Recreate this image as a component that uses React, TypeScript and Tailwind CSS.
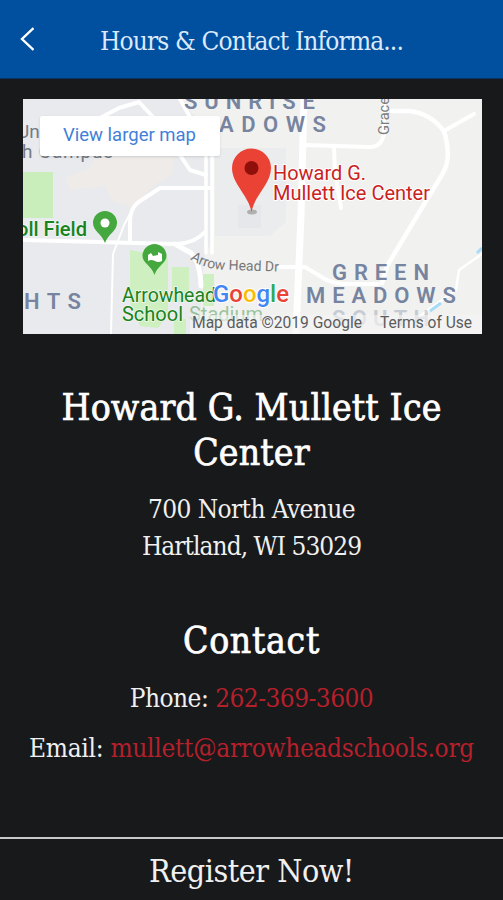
import { ReactNode } from 'react';

const SLAB = "font-['Roboto_Slab','DejaVu_Serif_Condensed','DejaVu_Serif',serif]";

function MapLabels() {
    return (
        <g fontFamily="Roboto, 'Liberation Sans', sans-serif">
            <g fill="#77849f" fontWeight="600" fontSize="22">
                <text x="184" y="109" textLength="131">SUNRISE</text>
                <text x="219" y="132" textLength="107">ADOWS</text>
                <text x="24" y="309" textLength="57">HTS</text>
                <text x="332" y="280" textLength="97">GREEN</text>
                <text x="306" y="303" textLength="150">MEADOWS</text>
                <text x="332" y="326" textLength="97" opacity="0.35">SOUTH</text>
            </g>
            <g fill="#747b82" fontSize="19">
                <text x="17" y="138">Un</text>
                <text x="22" y="158" textLength="91">h Campus</text>
            </g>
            <text
                transform="translate(389 135) rotate(-90)"
                fill="#7d7d7d"
                fontSize="15"
                textLength="38"
                lengthAdjust="spacingAndGlyphs"
            >
                Grace
            </text>
            <path id="arrow-head" d="M190 259 Q207 271 232 270 L290 272" fill="none" />
            <text fill="#777" fontSize="14">
                <textPath href="#arrow-head" textLength="91">Arrow Head Dr</textPath>
            </text>
            <g fill="#198221" stroke="#f3f7f1" strokeWidth="1.5" paintOrder="stroke" fontSize="19.500">
                <text x="17" y="236" fontWeight="500" textLength="70" lengthAdjust="spacingAndGlyphs">oll Field</text>
                <text x="122" y="302" textLength="94" lengthAdjust="spacingAndGlyphs">Arrowhead</text>
                <text x="122" y="321" textLength="61" lengthAdjust="spacingAndGlyphs">School</text>
                <text x="189" y="321" textLength="74" lengthAdjust="spacingAndGlyphs" opacity="0.4">Stadium</text>
            </g>
            <g fill="#c9221f" stroke="#fff" strokeWidth="2" paintOrder="stroke" fontSize="20">
                <text x="273" y="180" textLength="93" lengthAdjust="spacingAndGlyphs">Howard G.</text>
                <text x="273" y="200" textLength="157" lengthAdjust="spacingAndGlyphs">Mullett Ice Center</text>
            </g>
        </g>
    );
}

function MapCanvas() {
    return (
        <svg viewBox="23 99 459 235" className="block h-full w-full">
            <rect x="23" y="99" width="459" height="235" fill="#f1f1f0" />
            <path d="M23 99 H181 L194 116 L212 157 V241 L204 258 L199 334 H23Z" fill="#e9eaed" />
            <path d="M215 148 H286 V222 L270 236 H215Z" fill="#ebecee" />
            <path d="M238 205 H261 V228 H238Z" fill="#e6e7ea" />
            <path
                d="M65 178 L88 169 L96 157 L174 157 L173 174 L153 186 L132 207 L112 201 L105 186 L70 190Z"
                fill="#eeebe9"
            />
            <path d="M23 172 H53 V218 H23Z" fill="#c9eebb" />
            <path d="M130 250 L168 257 V314 L158 328 L140 326 L130 302Z" fill="#ceefc0" />
            <path d="M172 267 H189 V302 H172Z M174 319 H186 V334 H174Z M203 274 H214 V306 H203Z" fill="#ceefc0" />

            <g fill="none" stroke="#fff" strokeLinejoin="round" strokeLinecap="round">
                <path d="M23 240 L135 243 L177 244 Q195 243 205 232" strokeWidth="4" />
                <path d="M175 244 L191 253 Q200 261 201 286" strokeWidth="5" />
                <path d="M206 156 V253 M212 156 V253" strokeWidth="3.5" />
                <path d="M180 155 L190 170 L206 175" strokeWidth="4" />
                <path d="M130 241 V222 Q130 207 140 201 L160 188 H212" strokeWidth="4" />
                <path d="M98 119 L119 108 L139 102 L153 117 M180 99 L190 117" strokeWidth="4" />
                <path d="M130 214 L124 225 L113 254 L111 334" strokeWidth="2" />
                <path d="M304 99 L301 215 L296 334" strokeWidth="7" />
                <path d="M304 145 L370 147 Q382 147 384 133 V99" strokeWidth="4" />
                <path d="M334 147 L335 172 L341 208" strokeWidth="4" />
                <path
                    d="M392 111 H409 Q430 113 444 131 Q452 158 443 173 L417 216 L387 266 L382 283"
                    strokeWidth="4.5"
                />
                <path d="M444 131 L474 114" strokeWidth="4" />
                <path d="M280 267 H305 L325 279 Q334 284 347 284 H378" strokeWidth="4" />
                <path d="M482 254 L459 270 L456 290 L420 316" strokeWidth="2.5" />
            </g>
            <path d="M430 311 L441 303 M477 253 L482 248" stroke="#a6dcf6" strokeWidth="3" />

            <MapLabels />

            {/* park and stadium pins */}
            <g fill="#45a83e">
                <path d="M105 243 C102 234 93 231 93 223 A12 12 0 0 1 117 223 C117 231 108 234 105 243Z" />
                <path d="M154.500 275 C152 266 142.500 263 142.500 256 A12 12 0 0 1 166.500 256 C166.500 263 157 266 154.500 275Z" />
            </g>
            <circle cx="105" cy="223" r="4.500" fill="#fff" />
            <path
                d="M148 255 L151 253 L153 256 L158 255 V252 L162 254 V261 Q158 263 155 261 Q151 259 148 261Z"
                fill="#fff"
            />

            {/* selected place */}
            <ellipse cx="252" cy="212" rx="5" ry="2.500" fill="#999" opacity="0.7" />
            <path
                d="M251.500 212 C249 196 232 184 232 168 A19.500 19.500 0 0 1 271 168 C271 184 254 196 251.500 212Z"
                fill="#ea4335"
            />
            <circle cx="251.500" cy="168" r="7" fill="#8f0f0a" />

            {/* attribution */}
            <rect x="190" y="315" width="292" height="19" fill="#f5f5f5" opacity="0.6" />
            <g fontFamily="Roboto, 'Liberation Sans', sans-serif">
                <text
                    x="213"
                    y="302"
                    fontSize="24"
                    fontWeight="500"
                    textLength="76"
                    lengthAdjust="spacingAndGlyphs"
                    stroke="#fff"
                    strokeWidth="2"
                    paintOrder="stroke"
                >
                    <tspan fill="#4285f4">G</tspan>
                    <tspan fill="#ea4335">o</tspan>
                    <tspan fill="#fbbc05">o</tspan>
                    <tspan fill="#4285f4">g</tspan>
                    <tspan fill="#34a853">l</tspan>
                    <tspan fill="#ea4335">e</tspan>
                </text>
                <g fill="#5c5c5c" fontSize="16.500">
                    <text x="192" y="328" textLength="170" lengthAdjust="spacingAndGlyphs">
                        Map data ©2019 Google
                    </text>
                    <text x="380" y="328" textLength="92" lengthAdjust="spacingAndGlyphs">
                        Terms of Use
                    </text>
                </g>
            </g>
        </svg>
    );
}

function Row({ label, children }: { label: string; children: ReactNode }) {
    return (
        <p className="whitespace-nowrap leading-[50px]">
            {label} <a className="text-[#b5202b]">{children}</a>
        </p>
    );
}

export default function App() {
    return (
        <div className={`flex h-[900px] w-full flex-col overflow-hidden bg-[#18191b] text-[#f0f0f0] ${SLAB}`}>
            <header className="flex h-[79px] shrink-0 items-center border-b border-[#063565] bg-[#00509f]">
                <button className="flex h-full w-[55px] shrink-0 items-center pl-5">
                    <svg viewBox="0 0 14 24" className="h-6 w-3.5" fill="none" stroke="#fff" strokeWidth="2.4">
                        <path d="M13.500 1 L2 12 L13.500 23" />
                    </svg>
                </button>
                <h1 className="flex-1 whitespace-nowrap pr-[55px] pt-1 text-center text-[26px] tracking-[-0.86px] text-[#dce9fb]">
                    Hours &amp; Contact Informa...
                </h1>
            </header>

            <main className="flex flex-1 flex-col items-center pt-5 text-center">
                <div className="relative ml-px h-[235px] w-[459px]">
                    <MapCanvas />
                    <a className="absolute left-[17px] top-[17px] flex h-10 w-[180px] items-center justify-center rounded-xs bg-white font-['Roboto',sans-serif] text-[18.5px] text-[#437fd8] shadow">
                        View larger map
                    </a>
                </div>

                <h2 className="mt-[51px] whitespace-nowrap text-[37px] leading-[45px] tracking-[0.15px] text-white [-webkit-text-stroke:0.7px_white]">
                    Howard G. Mullett Ice
                    <br />
                    Center
                </h2>
                <p className="mt-4 whitespace-nowrap text-[26px] leading-[37px] tracking-[-0.6px]">
                    700 North Avenue
                    <br />
                    <span className="tracking-[-0.95px]">Hartland, WI 53029</span>
                </p>

                <h2 className="mb-2.5 mt-[53px] text-[37px] leading-[45px] tracking-[0.7px] text-white [-webkit-text-stroke:0.7px_white]">
                    Contact
                </h2>
                <div className="text-[26px] tracking-[-0.55px]">
                    <Row label="Phone:">262-369-3600</Row>
                    <div className="tracking-[-0.3px]">
                        <Row label="Email:">mullett@arrowheadschools.org</Row>
                    </div>
                </div>
            </main>

            <footer className="flex h-[63px] shrink-0 items-center justify-center border-t-2 border-[#c5c9ca] pt-0.5 text-[32px] tracking-[-0.5px]">
                Register Now!
            </footer>
        </div>
    );
}
